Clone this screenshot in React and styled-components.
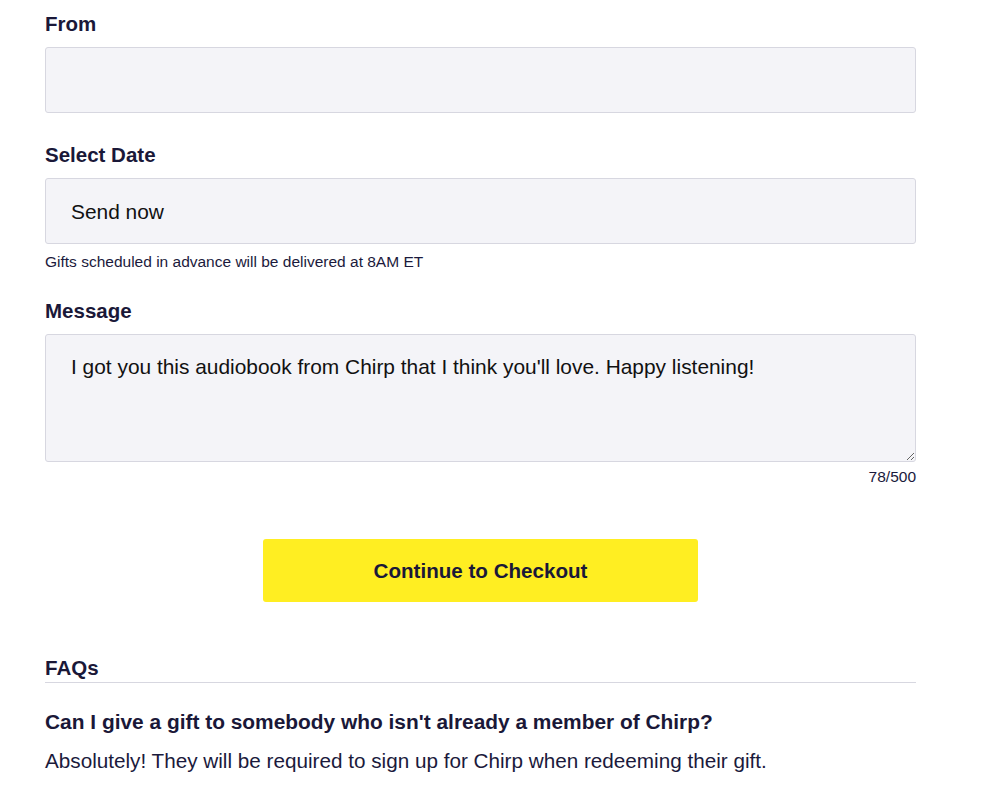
import React, { useState } from 'react';
import styled, { createGlobalStyle } from 'styled-components';

const GlobalStyle = createGlobalStyle`
  body {
    margin: 0;
    background: #ffffff;
    font-family: "Liberation Sans", Arial, Helvetica, sans-serif;
    color: #1b1a3c;
  }
`;

const Page = styled.div`
  width: 871px;
  padding: 12px 0 40px 45px;
`;

const Field = styled.div`
  margin-bottom: ${(p) => (p.$tight ? '28px' : '30px')};
`;

const Label = styled.label`
  display: block;
  font-size: 20.5px;
  line-height: 24px;
  font-weight: 700;
  color: #1a1838;
  margin-bottom: 11px;
`;

const boxStyles = `
  display: block;
  width: 100%;
  box-sizing: border-box;
  border: 1px solid #d7d7e0;
  border-radius: 3px;
  background: #f4f4f8;
  font-family: "Liberation Sans", Arial, Helvetica, sans-serif;
  font-size: 20.9px;
  color: #111111;
  padding: 0 25px;
  outline: none;
`;

const TextInput = styled.input`
  ${boxStyles}
  height: 66px;
`;

const Select = styled.select`
  ${boxStyles}
  height: 66px;
  appearance: none;
  -webkit-appearance: none;
`;

const TextArea = styled.textarea`
  ${boxStyles}
  height: 128px;
  padding: 20px 25px;
  line-height: 24px;
  resize: vertical;
`;

const Hint = styled.div`
  margin-top: ${(p) => (p.$right ? '6px' : '9px')};
  font-size: 15.5px;
  line-height: 18px;
  color: #1b1a3c;
  text-align: ${(p) => (p.$right ? 'right' : 'left')};
`;

const ButtonRow = styled.div`
  display: flex;
  justify-content: center;
  margin-top: 53px;
`;

const CheckoutButton = styled.button`
  width: 435px;
  height: 63px;
  border: none;
  border-radius: 3px;
  background: #ffee22;
  color: #1a1838;
  font-family: "Liberation Sans", Arial, Helvetica, sans-serif;
  font-size: 20.6px;
  font-weight: 700;
  cursor: pointer;
`;

const Faqs = styled.section`
  margin-top: 54px;
`;

const FaqTitle = styled.h2`
  margin: 0;
  font-size: 20.5px;
  line-height: 24px;
  font-weight: 700;
  color: #1a1838;
  padding-bottom: 2px;
  border-bottom: 1px solid #d7d7e0;
`;

const Question = styled.h3`
  margin: 27px 0 0;
  font-size: 20.9px;
  line-height: 24px;
  font-weight: 700;
  color: #1a1838;
`;

const Answer = styled.p`
  margin: 15px 0 0;
  font-size: 20.7px;
  line-height: 24px;
`;

export default function App() {
  const [from, setFrom] = useState('');
  const [message, setMessage] = useState(
    "I got you this audiobook from Chirp that I think you'll love. Happy listening!"
  );

  return (
    <Page>
      <GlobalStyle />
      <Field>
        <Label htmlFor="from">From</Label>
        <TextInput id="from" value={from} onChange={(e) => setFrom(e.target.value)} />
      </Field>
      <Field $tight>
        <Label htmlFor="date">Select Date</Label>
        <Select id="date" defaultValue="now">
          <option value="now">Send now</option>
          <option value="later">Schedule for later</option>
        </Select>
        <Hint>Gifts scheduled in advance will be delivered at 8AM ET</Hint>
      </Field>
      <div>
        <Label htmlFor="message">Message</Label>
        <TextArea
          id="message"
          maxLength={500}
          value={message}
          onChange={(e) => setMessage(e.target.value)}
        />
        <Hint $right>{message.length}/500</Hint>
      </div>
      <ButtonRow>
        <CheckoutButton>Continue to Checkout</CheckoutButton>
      </ButtonRow>
      <Faqs>
        <FaqTitle>FAQs</FaqTitle>
        <Question>Can I give a gift to somebody who isn't already a member of Chirp?</Question>
        <Answer>Absolutely! They will be required to sign up for Chirp when redeeming their gift.</Answer>
      </Faqs>
    </Page>
  );
}
